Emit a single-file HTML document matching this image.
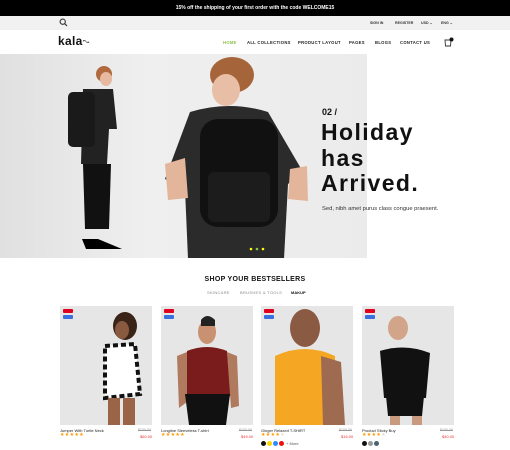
<!DOCTYPE html><html><head><style>
*{margin:0;padding:0;box-sizing:border-box}
body{width:510px;height:450px;overflow:hidden;background:#fff;font-family:"Liberation Sans",sans-serif;position:relative}
.a{position:absolute}
.top{left:0;top:0;width:510px;height:16px;background:#000;color:#fff;font-size:5px;font-weight:bold;text-align:center;line-height:16px}
.gray{left:0;top:16px;width:510px;height:14px;background:#f1f1f1}
.s{font-size:3.6px;font-weight:bold;color:#333;top:21px}
.nav{font-size:4.2px;font-weight:bold;color:#222;top:40px;letter-spacing:.3px}
.card{top:306px;width:92px;height:119px;background:#e6e6e6;overflow:hidden}
.tag{left:3px;width:10px;height:4px;border-radius:1px}
.nm{font-size:4px;color:#222;top:428px}
.op{font-size:3.6px;color:#999;text-decoration:line-through;top:428px}
.np{font-size:4px;color:#e33;top:434px}
.st{font-size:5px;color:#f90;top:432px;letter-spacing:.3px}
.dot{width:5px;height:5px;border-radius:50%;top:441px}
</style></head><body>
<div class="a top">15% off the shipping of your first order with the code WELCOME15</div>
<div class="a gray"></div>
<svg class="a" style="left:59px;top:18px" width="9" height="9" viewBox="0 0 9 9"><circle cx="3.7" cy="3.7" r="2.6" fill="none" stroke="#333" stroke-width="1.1"/><path d="M5.6 5.6L8 8" stroke="#333" stroke-width="1.2"/></svg>
<div class="a s" style="left:370px">SIGN IN</div>
<div class="a s" style="left:395px">REGISTER</div>
<div class="a s" style="left:421px">USD ⌄</div>
<div class="a s" style="left:441px">ENG ⌄</div>
<div class="a" style="left:58px;top:34px;font-size:12px;font-weight:bold;color:#111;letter-spacing:.3px">kala<span style="font-size:8px">ᵔᵕ</span></div>
<div class="a nav" style="left:223px;color:#8bc34a">HOME</div>
<div class="a nav" style="left:247px">ALL COLLECTIONS</div>
<div class="a nav" style="left:298px">PRODUCT LAYOUT</div>
<div class="a nav" style="left:349px">PAGES</div>
<div class="a nav" style="left:375px">BLOGS</div>
<div class="a nav" style="left:400px">CONTACT US</div>
<svg class="a" style="left:443px;top:37px" width="11" height="10" viewBox="0 0 11 10"><path d="M2 3h6l-.5 6h-5z" fill="none" stroke="#333" stroke-width=".9"/><circle cx="8.5" cy="2.5" r="2" fill="#111"/></svg>
<svg class="a" style="left:0;top:54px" width="367" height="204" viewBox="0 0 367 204">
<defs><linearGradient id="g" x1="0" x2="1"><stop offset="0" stop-color="#e0e0e0"/><stop offset=".4" stop-color="#efefef"/><stop offset="1" stop-color="#ebebeb"/></linearGradient></defs>
<rect width="367" height="204" fill="url(#g)"/>
<circle cx="104" cy="20" r="8" fill="#b06a3e"/><ellipse cx="106" cy="25" rx="6" ry="7" fill="#e6b9a0"/>
<path d="M83 35h30l4 40h-8l-2 35h-26z" fill="#222"/>
<rect x="68" y="38" width="27" height="55" rx="5" fill="#1a1a1a"/>
<path d="M83 110h28l-2 65h-24z" fill="#111"/>
<path d="M82 185h16l24 10h-36z" fill="#000"/>
<ellipse cx="232" cy="21" rx="22" ry="18" fill="#a6643a"/>
<ellipse cx="226" cy="36" rx="14" ry="16" fill="#e8bfa6"/>
<path d="M190 58q40-12 78 0l35 60-15 12-4 75h-96l-3-70-20-10z" fill="#2b2b2b"/>
<path d="M165 110l20-6 3 40-20 2zM290 115l17-3 1 35-20-2z" fill="#e3b59a"/>
<rect x="200" y="65" width="78" height="108" rx="18" fill="#111"/>
<rect x="208" y="118" width="62" height="50" rx="6" fill="#1c1c1c"/>
<circle cx="251" cy="195" r="1.3" fill="#ff0"/><circle cx="257" cy="195" r="1.3" fill="#8bc34a"/><circle cx="263" cy="195" r="1.3" fill="#ff0"/>
</svg>
<div class="a" style="left:322px;top:107px;font-size:9px;font-weight:bold;color:#111">02 /</div>
<div class="a" style="left:321px;top:120px;font-size:23px;line-height:25.5px;color:#111;letter-spacing:1.4px;font-weight:bold">Holiday<br>has<br>Arrived.</div>
<div class="a" style="left:322px;top:206px;font-size:5.8px;color:#333">Sed, nibh amet purus class congue praesent.</div>
<div class="a" style="left:0;top:276px;width:510px;text-align:center;font-size:7px;font-weight:bold;color:#111;letter-spacing:.3px">SHOP YOUR BESTSELLERS</div>
<div class="a" style="left:207px;top:290px;font-size:4px;color:#888;letter-spacing:.3px">SKINCARE</div>
<div class="a" style="left:240px;top:290px;font-size:4px;color:#888;letter-spacing:.3px">BRUSHES &amp; TOOLS</div>
<div class="a" style="left:291px;top:290px;font-size:4px;color:#111;font-weight:bold">MAKUP</div>
<div class="a card" style="left:60px"><svg width="92" height="119"><ellipse cx="65" cy="20" rx="12" ry="14" fill="#3a2418"/><ellipse cx="62" cy="24" rx="7" ry="9" fill="#8a5a40"/><path d="M45 40l30-2 5 50-35 4z" fill="#fff" stroke="#111" stroke-width="4" stroke-dasharray="5 3"/><path d="M48 92h12v27H48zM63 92h12v27H63z" fill="#9a6448"/></svg></div>
<div class="a card" style="left:161px"><svg width="92" height="119"><ellipse cx="46" cy="26" rx="9" ry="12" fill="#c79172"/><path d="M40 14q6-8 14 0v6H40z" fill="#222"/><path d="M26 45q20-8 40 0l4 45H24z" fill="#7a1c1c"/><path d="M16 50l10-4v50l-8 6zM66 46l10 4 2 50-8 2z" fill="#b07a5f"/><path d="M24 88h45l-4 31H28z" fill="#111"/></svg></div>
<div class="a card" style="left:261px"><svg width="92" height="119"><ellipse cx="44" cy="22" rx="15" ry="19" fill="#8a5a42"/><path d="M14 50q30-14 60 0v69H14z" fill="#f5a623"/><path d="M60 50l20 6 4 63H62z" fill="#9e6a50"/></svg></div>
<div class="a card" style="left:362px"><svg width="92" height="119"><ellipse cx="36" cy="22" rx="10" ry="12" fill="#d2a48a"/><path d="M18 45q25-8 50 2l-4 45H22z" fill="#111"/><path d="M24 90h38l-2 20H26z" fill="#111"/><path d="M28 110h10v9H28zM50 110h10v9H50z" fill="#c89a80"/></svg></div>
<div class="a tag" style="left:63px;top:309px;background:#e1001e"></div><div class="a tag" style="left:63px;top:315px;background:#3a6fe0"></div>
<div class="a tag" style="left:164px;top:309px;background:#e1001e"></div><div class="a tag" style="left:164px;top:315px;background:#3a6fe0"></div>
<div class="a tag" style="left:264px;top:309px;background:#e1001e"></div><div class="a tag" style="left:264px;top:315px;background:#3a6fe0"></div>
<div class="a tag" style="left:365px;top:309px;background:#e1001e"></div><div class="a tag" style="left:365px;top:315px;background:#3a6fe0"></div>
<div class="a nm" style="left:60px">Jumper With Turtle Neck</div><div class="a op" style="left:138px">$100.00</div><div class="a st" style="left:60px">★★★★★</div><div class="a np" style="left:140px">$60.00</div>
<div class="a nm" style="left:161px">Longline Sleeveless T-shirt</div><div class="a op" style="left:239px">$100.00</div><div class="a st" style="left:161px">★★★★★</div><div class="a np" style="left:241px">$49.00</div>
<div class="a nm" style="left:261px">Ginger Relaxed T-SHIRT</div><div class="a op" style="left:339px">$100.00</div><div class="a st" style="left:261px">★★★★<span style="color:#ddd">★</span></div><div class="a np" style="left:341px">$16.00</div>
<div class="a nm" style="left:362px">Product Sticky Buy</div><div class="a op" style="left:440px">$100.00</div><div class="a st" style="left:362px">★★★★<span style="color:#ddd">★</span></div><div class="a np" style="left:442px">$40.00</div>
<div class="a dot" style="left:261px;background:#111"></div><div class="a dot" style="left:267px;background:#ffd400"></div><div class="a dot" style="left:273px;background:#2a8cff"></div><div class="a dot" style="left:279px;background:#e11"></div><div class="a" style="left:286px;top:441px;font-size:4px;color:#555">+ More</div>
<div class="a dot" style="left:362px;background:#111"></div><div class="a dot" style="left:368px;background:#999"></div><div class="a dot" style="left:374px;background:#4b6470"></div>
</body></html>
